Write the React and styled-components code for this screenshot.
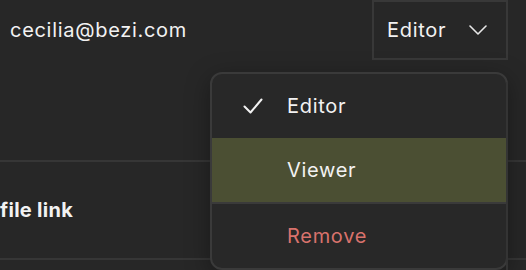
import React from "react";
import styled, { createGlobalStyle } from "styled-components";

const GlobalStyle = createGlobalStyle`
  html, body {
    margin: 0;
    background: #272727;
  }
  body {
    font-family: "Inter", "Noto Sans", sans-serif;
    color: #f2f2f2;
    -webkit-font-smoothing: antialiased;
  }
`;

const roles = [
  { label: "Editor", checked: true },
  { label: "Viewer", active: true },
];

export default function App() {
  return (
    <>
      <GlobalStyle />
      <Page>
        <MemberRow>
          <Email>cecilia@bezi.com</Email>
          <RoleSelect>
            <span>Editor</span>
            <Chevron />
            <Menu>
              {roles.map((r) => (
                <MenuItem key={r.label} $active={r.active}>
                  <CheckSlot>{r.checked && <Check />}</CheckSlot>
                  {r.label}
                </MenuItem>
              ))}
              <Separator />
              <MenuItem $danger>
                <CheckSlot />
                Remove
              </MenuItem>
            </Menu>
          </RoleSelect>
        </MemberRow>
        <LinkRow>file link</LinkRow>
      </Page>
    </>
  );
}

function Chevron() {
  return (
    <svg width="18" height="10" viewBox="0 0 18 10" fill="none">
      <path d="M1 1l8 8 8-8" stroke="#e8e8e8" strokeWidth="1.6" strokeLinecap="round" strokeLinejoin="round" />
    </svg>
  );
}

function Check() {
  return (
    <svg width="20" height="16" viewBox="0 0 20 16" fill="none">
      <path d="M1.5 8.5l6 6L18.5 1.5" stroke="#f2f2f2" strokeWidth="2" strokeLinecap="round" strokeLinejoin="round" />
    </svg>
  );
}

const Page = styled.div`
  width: 526px;
  height: 270px;
  overflow: hidden;
  position: relative;
`;

const MemberRow = styled.div`
  display: flex;
  justify-content: space-between;
  align-items: flex-start;
  height: 160px;
  padding: 0 18px 0 10px;
  border-bottom: 2px solid #363636;
`;

const Email = styled.div`
  font-size: 20px;
  line-height: 60px;
  letter-spacing: 0.7px;
`;

const RoleSelect = styled.div`
  position: relative;
  box-sizing: border-box;
  width: 136px;
  height: 60px;
  display: flex;
  align-items: center;
  justify-content: space-between;
  padding: 0 19px 0 13px;
  border: 2px solid #383838;
  font-size: 20px;
  letter-spacing: 0.7px;
  cursor: pointer;
`;

const Menu = styled.div`
  position: absolute;
  top: 70px;
  right: -2px;
  box-sizing: border-box;
  width: 298px;
  background: #282828;
  border: 2px solid #3a3a3a;
  border-radius: 12px;
  box-shadow: 0 6px 24px rgba(0, 0, 0, 0.35);
  z-index: 2;

  &::after {
    content: "";
    position: absolute;
    top: 8px;
    right: -2px;
    bottom: -30px;
    width: 2px;
    background: #343434;
    z-index: -1;
  }
`;

const MenuItem = styled.div`
  display: flex;
  align-items: center;
  height: 64px;
  padding-left: 31px;
  font-size: 20px;
  letter-spacing: 0.7px;
  color: ${(p) => (p.$danger ? "#d8726c" : "#f2f2f2")};
  background: ${(p) => (p.$active ? "#4b4f33" : "transparent")};
`;

const CheckSlot = styled.span`
  display: flex;
  align-items: center;
  width: 44px;
`;

const Separator = styled.div`
  height: 2px;
  background: #3a3a3a;
`;

const LinkRow = styled.div`
  display: flex;
  align-items: center;
  height: 96px;
  font-size: 20px;
  font-weight: 700;
  letter-spacing: 0.3px;
  border-bottom: 2px solid #363636;
`;
